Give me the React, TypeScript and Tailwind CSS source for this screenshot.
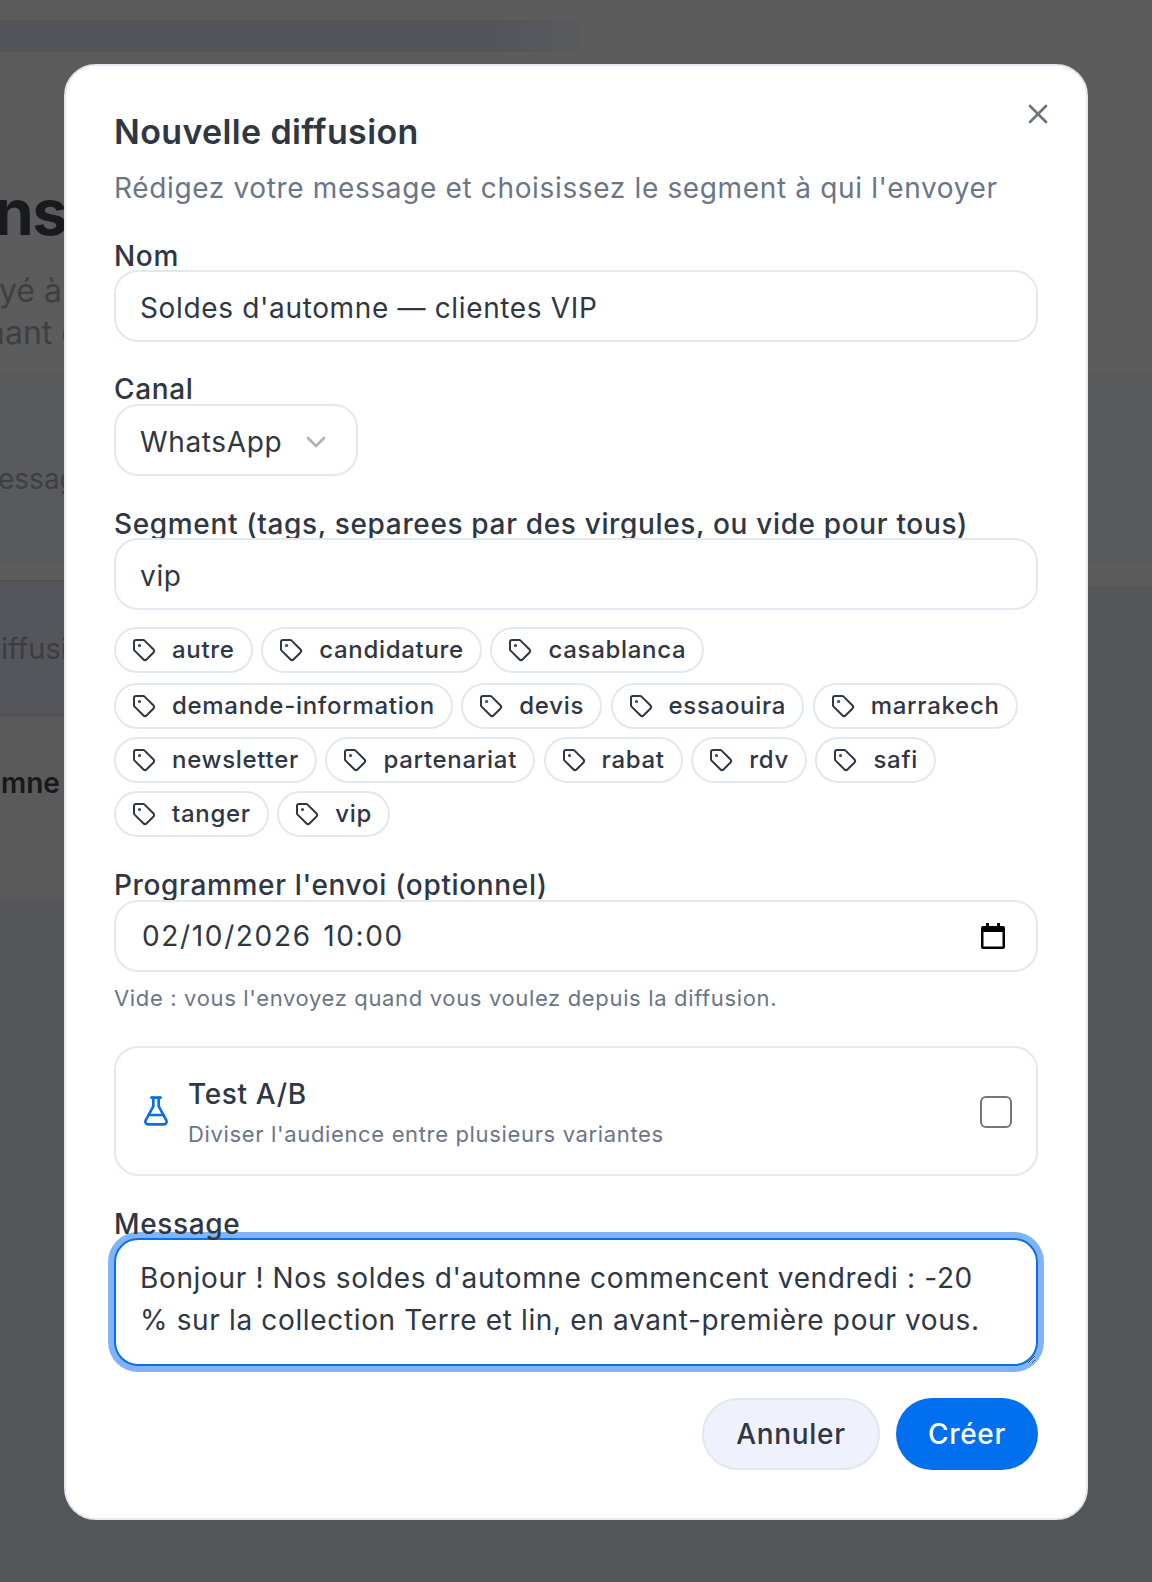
import { Tag, X, ChevronDown, FlaskConical } from "lucide-react";

const rows = [
  ["autre", "candidature", "casablanca"],
  ["demande-information", "devis", "essaouira", "marrakech"],
  ["newsletter", "partenariat", "rabat", "rdv", "safi"],
  ["tanger", "vip"],
];

function Chip({ label }: { label: string }) {
  return (
    <span className="inline-flex h-[46px] items-center gap-[16px] rounded-full border-2 border-[#e2e8f0] bg-white pl-[16px] pr-[16px] text-[24px] font-medium leading-none tracking-[0.7px] text-[#2f3644]">
      <Tag size={24} strokeWidth={2} className="text-[#2f3644]" />
      {label}
    </span>
  );
}

function Label({ children, className }: { children: React.ReactNode; className: string }) {
  return <label className={"block text-[28px] font-medium leading-[28px] text-[#2f3644] " + className}>{children}</label>;
}

const fieldClass =
  "relative block h-[72px] w-full rounded-[24px] border-2 border-[#e2e8f0] bg-white px-[24px] pt-[3px] text-[28px] text-[#2f3644] outline-none";

export default function App() {
  return (
    <div className="relative h-[1582px] w-full overflow-hidden bg-[#55565a] font-['Inter',sans-serif] tracking-[0.65px]">
      {/* page beneath the dialog */}
      <div className="h-[586px] bg-[#5c5c5c] pt-[20px]">
        <div className="h-[32px] w-[578px] bg-linear-to-r from-[#53555b] from-85% to-[#585a5d]" />
        <h1 className="mt-[128px] ml-[-6px] text-[64px] font-bold leading-[64px] tracking-tight whitespace-nowrap text-[#191a1d]">
          ns
        </h1>
        <p className="mt-[26px] ml-[-1px] text-[32px] leading-[42px] tracking-normal whitespace-nowrap text-[#3e3f42]">yé à</p>
        <p className="ml-[-14px] text-[32px] leading-[42px] tracking-normal whitespace-nowrap text-[#3e3f42]">nant c</p>
        <div className="mt-[18px] flex h-[193px] items-center bg-[#595a5c] pt-[20px]">
          <span className="ml-[-2px] text-[28px] tracking-normal whitespace-nowrap text-[#3e3f42]">essag</span>
        </div>
      </div>
      <div className="mt-[-6px] flex h-[136px] w-[600px] items-center border-y-2 border-[#505256] bg-[#54565c] pt-[2px]">
        <span className="ml-[1px] text-[29px] tracking-normal whitespace-nowrap text-[#3c3d41]">iffusi</span>
      </div>
      <div className="flex h-[185px] w-[600px] items-center bg-[#5a5a5b] pb-[52px]">
        <span className="ml-[1px] text-[28px] font-semibold tracking-normal whitespace-nowrap text-[#17181a]">mne</span>
      </div>

      {/* dialog */}
      <div className="absolute top-[64px] left-[64px] h-[1456px] w-[1024px] rounded-[32px] border-2 border-[#e2e8f0] bg-white p-[48px]">
        <button className="absolute top-[32px] right-[32px] text-[#6b7280]">
          <X size={32} strokeWidth={2} />
        </button>
        <h2 className="text-[34px] font-semibold leading-[36px] tracking-[0.35px] text-[#2f3644]">Nouvelle diffusion</h2>
        <p className="mt-[18px] text-[28px] leading-[40px] text-[#6b7587]">
          Rédigez votre message et choisissez le segment à qui l'envoyer
        </p>

        <Label className="mt-[34px]">Nom</Label>
        <input className={fieldClass} readOnly value="Soldes d'automne — clientes VIP" />

        <Label className="mt-[33px]">Canal</Label>
        <button className="relative mt-[1px] flex h-[72px] w-[244px] items-center rounded-[24px] border-2 border-[#e2e8f0] bg-white pt-[3px] pl-[24px] text-[28px] text-[#2f3644]">
          WhatsApp
          <ChevronDown size={32} strokeWidth={2} className="absolute right-[24px] text-[#aeb2b9]" />
        </button>

        <Label className="mt-[34px]">Segment (tags, separees par des virgules, ou vide pour tous)</Label>
        <input className={fieldClass} readOnly value="vip" />

        <div className="mt-[17px] flex gap-[8.5px]">
          {rows[0].map((t) => (
            <Chip key={t} label={t} />
          ))}
        </div>
        <div className="mt-[10px] flex gap-[8.5px]">
          {rows[1].map((t) => (
            <Chip key={t} label={t} />
          ))}
        </div>
        <div className="mt-[8px] flex gap-[8.5px]">
          {rows[2].map((t) => (
            <Chip key={t} label={t} />
          ))}
        </div>
        <div className="mt-[8px] flex gap-[8.5px]">
          {rows[3].map((t) => (
            <Chip key={t} label={t} />
          ))}
        </div>

        <Label className="mt-[34px]">Programmer l'envoi (optionnel)</Label>
        <div className="relative mt-[1px] flex h-[72px] w-full items-center justify-between rounded-[24px] border-2 border-[#e2e8f0] bg-white pr-[30px] pl-[26px] text-[28px] tracking-[1.65px] [word-spacing:2px] text-[#2f3644]">
          <span>02/10/2026 10:00</span>
          <svg width="26" height="28" viewBox="0 0 26 28" fill="none">
            <path d="M6 1h3v3h8V1h3v3h3a2 2 0 0 1 2 2v19a2 2 0 0 1-2 2H3a2 2 0 0 1-2-2V6a2 2 0 0 1 2-2h3z" fill="#000" />
            <rect x="3.5" y="10" width="19" height="14.5" fill="#fff" />
          </svg>
        </div>
        <p className="mt-[10px] text-[22px] leading-[32px] text-[#6b7587]">
          Vide : vous l'envoyez quand vous voulez depuis la diffusion.
        </p>

        <div className="mt-[32px] flex h-[130px] items-center rounded-[24px] border-2 border-[#e2e8f0] pr-[24px] pl-[24px]">
          <FlaskConical size={32} strokeWidth={2} className="text-[#0a6fe8]" />
          <div className="ml-[16px] flex-1 pt-[3px]">
            <div className="text-[28px] leading-[36px] font-medium text-[#2f3644]">Test A/B</div>
            <div className="mt-[6px] text-[22px] leading-[32px] text-[#6b7587]">Diviser l'audience entre plusieurs variantes</div>
          </div>
          <input type="checkbox" className="mt-[2px] h-[32px] w-[32px] appearance-none rounded-[6px] border-[2.5px] border-[#767676] bg-white" />
        </div>

        <Label className="mt-[34px]">Message</Label>
        <textarea
          readOnly
          value="Bonjour ! Nos soldes d'automne commencent vendredi : -20 % sur la collection Terre et lin, en avant-première pour vous."
          className="block h-[128px] w-full rounded-[24px] border-2 border-[#0a6fe8] bg-white pt-[17px] pr-[44px] pb-[15px] pl-[24px] text-[28px] leading-[42px] text-[#2f3644] shadow-[0_0_0_6px_#80b4f6] outline-none"
        />

        <div className="mt-[32px] flex justify-end gap-[16px]">
          <button className="h-[72px] w-[178px] rounded-full border-2 border-[#e2e6ee] bg-[#eff2fc] text-[28px] font-medium text-[#2f3644]">
            Annuler
          </button>
          <button className="h-[72px] w-[142px] rounded-full bg-[#016fee] text-[28px] font-medium text-white">Créer</button>
        </div>
      </div>
    </div>
  );
}
